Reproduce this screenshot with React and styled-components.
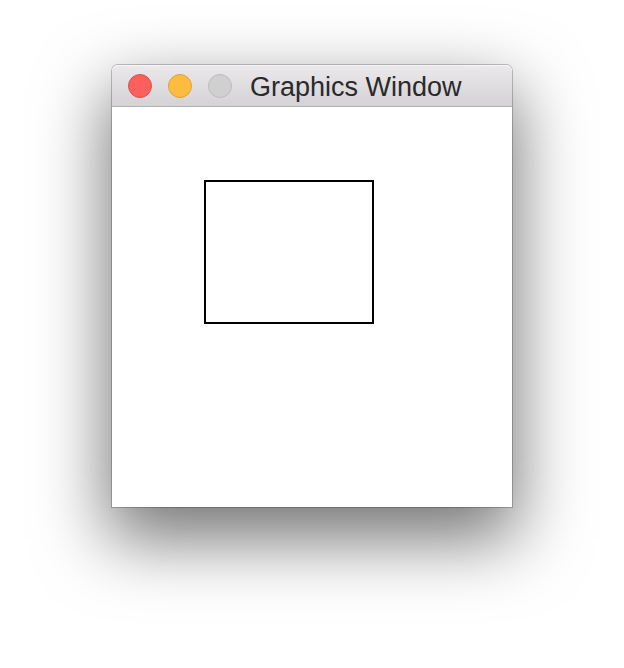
import React from "react";
import styled, { createGlobalStyle } from "styled-components";

const Global = createGlobalStyle`
  html, body { margin: 0; padding: 0; background: #ffffff; }
  body { width: 624px; height: 668px; overflow: hidden; font-family: "Liberation Sans", Arial, sans-serif; }
`;

const Page = styled.div`
  width: 624px;
  height: 668px;
  box-sizing: border-box;
  padding: 65px 0 0 112px;
  background: #ffffff;
`;

const Window = styled.div`
  width: 400px;
  display: flex;
  flex-direction: column;
  border-radius: 6px 6px 0 0;
  background: #ffffff;
  box-shadow: 0 0 0 1px rgba(0, 0, 0, 0.22), 0 28px 70px 4px rgba(0, 0, 0, 0.55);
`;

const TitleBar = styled.div`
  height: 41px;
  display: flex;
  align-items: center;
  padding-left: 16px;
  gap: 16px;
  background: linear-gradient(to bottom, #ebe9eb, #d4d2d4);
  border-bottom: 1px solid #b3b1b3;
  border-radius: 6px 6px 0 0;
  box-shadow: inset 0 1px 0 rgba(255, 255, 255, 0.6);
`;

const Light = styled.span`
  width: 24px;
  height: 24px;
  box-sizing: border-box;
  border-radius: 50%;
  background: ${(p) => p.$fill};
  border: 1px solid ${(p) => p.$edge};
  flex: none;
`;

const Title = styled.span`
  margin-left: 2px;
  font-family: "Liberation Sans", Arial, sans-serif;
  font-size: 27px;
  color: #2a2a2a;
  line-height: 1;
  padding-top: 4px;
`;

const Canvas = styled.svg`
  display: block;
  width: 400px;
  height: 400px;
  background: #ffffff;
`;

export default function App() {
  return (
    <>
      <Global />
      <Page>
        <Window>
          <TitleBar>
            <Light $fill="#fc605c" $edge="#de4f4a" />
            <Light $fill="#fdbc40" $edge="#dea236" />
            <Light $fill="#d0d0d0" $edge="#bcbcbc" />
            <Title>Graphics Window</Title>
          </TitleBar>
          <Canvas viewBox="0 0 400 400">
            <rect x="93" y="74" width="168" height="142" fill="none" stroke="#000" strokeWidth="2" />
          </Canvas>
        </Window>
      </Page>
    </>
  );
}
